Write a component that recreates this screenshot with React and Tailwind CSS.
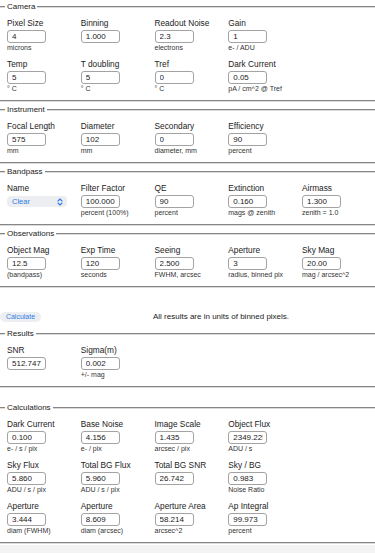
import React from 'react';

const camera = [
  { label: 'Pixel Size', value: '4', unit: 'microns' },
  { label: 'Binning', value: '1.000', unit: '' },
  { label: 'Readout Noise', value: '2.3', unit: 'electrons' },
  { label: 'Gain', value: '1', unit: 'e- / ADU' },
  { label: 'Temp', value: '5', unit: '° C', row: true },
  { label: 'T doubling', value: '5', unit: '° C' },
  { label: 'Tref', value: '0', unit: '° C' },
  { label: 'Dark Current', value: '0.05', unit: 'pA / cm^2 @ Tref' },
];

const instrument = [
  { label: 'Focal Length', value: '575', unit: 'mm' },
  { label: 'Diameter', value: '102', unit: 'mm' },
  { label: 'Secondary', value: '0', unit: 'diameter, mm' },
  { label: 'Efficiency', value: '90', unit: 'percent' },
];

const bandpass = [
  { label: 'Filter Factor', value: '100.000', unit: 'percent (100%)' },
  { label: 'QE', value: '90', unit: 'percent' },
  { label: 'Extinction', value: '0.160', unit: 'mags @ zenith' },
  { label: 'Airmass', value: '1.300', unit: 'zenith = 1.0' },
];

const observations = [
  { label: 'Object Mag', value: '12.5', unit: '(bandpass)' },
  { label: 'Exp Time', value: '120', unit: 'seconds' },
  { label: 'Seeing', value: '2.500', unit: 'FWHM, arcsec' },
  { label: 'Aperture', value: '3', unit: 'radius, binned pix' },
  { label: 'Sky Mag', value: '20.00', unit: 'mag / arcsec^2' },
];

const results = [
  { label: 'SNR', value: '512.747', unit: '' },
  { label: 'Sigma(m)', value: '0.002', unit: '+/- mag' },
];

const calculations = [
  { label: 'Dark Current', value: '0.100', unit: 'e- / s / pix' },
  { label: 'Base Noise', value: '4.156', unit: 'e- / pix' },
  { label: 'Image Scale', value: '1.435', unit: 'arcsec / pix' },
  { label: 'Object Flux', value: '2349.225', unit: 'ADU / s' },
  { label: 'Sky Flux', value: '5.860', unit: 'ADU / s / pix' },
  { label: 'Total BG Flux', value: '5.960', unit: 'ADU / s / pix' },
  { label: 'Total BG SNR', value: '26.742', unit: '' },
  { label: 'Sky / BG', value: '0.983', unit: 'Noise Ratio' },
  { label: 'Aperture', value: '3.444', unit: 'diam (FWHM)' },
  { label: 'Aperture', value: '8.609', unit: 'diam (arcsec)' },
  { label: 'Aperture Area', value: '58.214', unit: 'arcsec^2' },
  { label: 'Ap Integral', value: '99.973', unit: 'percent' },
];

const Field = ({ label, value, unit }) => (
  <div className="flex flex-col items-start">
    <div className="text-[8.3px] leading-[11px] text-[#222] whitespace-nowrap">{label}</div>
    <input
      readOnly
      value={value}
      className="mt-[1px] w-[39px] h-[13px] border border-[#a3a3a3] rounded-[3px] pl-[4px] pr-[3px] text-[8px] text-[#222] bg-white outline-none"
    />
    <div className="mt-[1px] h-[8px] text-[7px] leading-[8px] text-[#333] whitespace-nowrap">{unit}</div>
  </div>
);

const Section = ({ title, children }) => (
  <fieldset className="mt-[1px] border-x-0 border-y-2 [border-style:groove] border-[#dadada] pl-[5px] pt-[4px] pb-[7px]">
    <legend className="px-[2px] text-[8px] leading-[14px] text-[#222]">{title}</legend>
    <div className="pl-[2px] grid grid-cols-[repeat(5,73.75px)] gap-y-[7px]">{children}</div>
  </fieldset>
);

const Chevrons = () => (
  <svg width="6" height="8" viewBox="0 0 6 8" fill="none" stroke="#2f7de1" strokeWidth="1.1" strokeLinecap="round" strokeLinejoin="round">
    <path d="M1 3 L3 1 L5 3" />
    <path d="M1 5 L3 7 L5 5" />
  </svg>
);

const App = () => {
  return (
    <div className="w-[375px] min-h-[553px] bg-white font-['Liberation_Sans',Arial,sans-serif] overflow-hidden">
      <fieldset className="border-x-0 border-y-2 [border-style:groove] border-[#dadada] pl-[5px] pt-[4px] pb-[7px]">
        <legend className="px-[2px] text-[8px] leading-[14px] text-[#222]">Camera</legend>
        <div className="pl-[2px] grid grid-cols-[repeat(5,73.75px)] gap-y-[7px]">
          {camera.map((f, i) => (
            <React.Fragment key={i}>
              {f.row && <div />}
              <Field {...f} />
            </React.Fragment>
          ))}
        </div>
      </fieldset>

      <Section title="Instrument">
        {instrument.map((f, i) => <Field key={i} {...f} />)}
      </Section>

      <Section title="Bandpass">
        <div className="flex flex-col items-start">
          <div className="text-[8.3px] leading-[11px] text-[#222]">Name</div>
          <div className="mt-[2px] w-[60px] h-[11px] rounded-[4px] bg-[#eceef2] flex items-center justify-between pl-[5px] pr-[4px]">
            <span className="text-[7.5px] text-[#2f7de1]">Clear</span>
            <Chevrons />
          </div>
        </div>
        {bandpass.map((f, i) => <Field key={i} {...f} />)}
      </Section>

      <Section title="Observations">
        {observations.map((f, i) => <Field key={i} {...f} />)}
      </Section>

      <div className="flex items-center mt-[24px] mb-[5px] h-[10px]">
        <button className="h-[10px] w-[41px] rounded-full bg-[#eceef2] text-[7px] leading-[10px] text-[#2f7de1]">Calculate</button>
        <span className="ml-[112px] text-[8px] text-[#222] whitespace-nowrap">All results are in units of binned pixels.</span>
      </div>

      <Section title="Results">
        {results.map((f, i) => <Field key={i} {...f} />)}
      </Section>

      <div className="h-[12px]" />

      <Section title="Calculations">
        {calculations.map((f, i) => (
          <React.Fragment key={i}>
            <Field {...f} />
            {i % 4 === 3 && <div />}
          </React.Fragment>
        ))}
      </Section>

      <div className="mt-[1px] h-[10px] bg-[#f3f3f3]" />
    </div>
  );
};

export default App;
